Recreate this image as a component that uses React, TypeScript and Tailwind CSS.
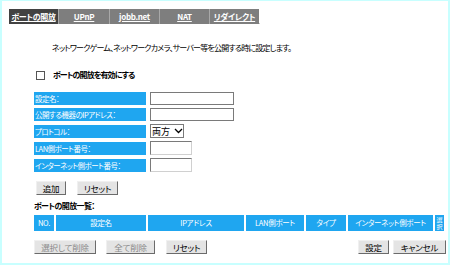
import React from "react";

const F = { fontFamily: '"Noto Sans CJK JP", "Liberation Sans", sans-serif' };

function Btn({ children, w, disabled }: { children: React.ReactNode; w: string; disabled?: boolean }) {
  return (
    <div
      className={`${w} h-[14px] flex items-center justify-center text-[8.5px] tracking-[-0.2px] leading-none whitespace-nowrap border border-t-[#f0f0f0] border-l-[#f0f0f0] border-r-[#6b6b6b] border-b-[#6b6b6b] bg-[#e4e4e4] ${disabled ? "text-[#8a8a8a]" : "text-black"}`}
    >
      {children}
    </div>
  );
}

function Label({ children }: { children: React.ReactNode }) {
  return (
    <div className="w-[112px] h-[13px] bg-[#1fa6f0] text-white text-[7.5px] tracking-[-0.5px] leading-[13px] pl-[1px] whitespace-nowrap">
      {children}
    </div>
  );
}

function Input({ w }: { w: string }) {
  return <div className={`${w} h-[13px] border border-[#7a7a7a] bg-white`} />;
}

export default function App() {
  const tabs = [
    { t: "ポートの開放", w: "w-[49px]", a: true },
    { t: "UPnP", w: "w-[51px]" },
    { t: "jobb.net", w: "w-[50px]" },
    { t: "NAT", w: "w-[50px]" },
    { t: "リダイレクト", w: "w-[50px]" },
  ];
  const heads = [
    { t: "NO.", w: "w-[20px]" },
    { t: "設定名", w: "w-[90px]" },
    { t: "IPアドレス", w: "w-[96px]" },
    { t: "LAN側ポート", w: "w-[58px]" },
    { t: "タイプ", w: "w-[40px]" },
    { t: "インターネット側ポート", w: "w-[85px]" },
  ];
  return (
    <div
      style={F}
      className="w-[450px] h-[265px] bg-white border-[#c8ffff] border-l-2 border-t border-r-2 border-b-2 overflow-hidden [font-feature-settings:'palt']"
    >
      {/* tabs */}
      <div className="ml-[7px] mt-[8px] flex h-[15px] border-b border-[#c8c8c8] w-[251px]">
        {tabs.map((t, i) => (
          <div
            key={i}
            className={`${t.w} h-[15px] flex items-center justify-center text-white text-[8px] tracking-[-0.3px] font-bold underline leading-none whitespace-nowrap ${
              t.a ? "bg-[#424242]" : "bg-[#7e7e7e] border-l border-[#a8a8a8]"
            }`}
          >
            {t.t}
          </div>
        ))}
      </div>

      <div className="ml-[50px] mt-[18px] text-[8px] tracking-[-0.8px] leading-[12px] text-black whitespace-nowrap">
        ネットワークゲーム、ネットワークカメラ、サーバー等を公開する時に設定します。
      </div>

      <div className="ml-[34px] mt-[16px] flex items-center h-[10px]">
        <div className="w-[9px] h-[9px] border border-[#555] bg-white" />
        <div className="ml-[8px] text-[8px] tracking-[-0.9px] font-bold leading-none whitespace-nowrap">ポートの開放を有効にする</div>
      </div>

      <div className="ml-[32px] mt-[12px] flex flex-col gap-[3px]">
        <div className="flex gap-[4px] items-center">
          <Label>設定名：</Label>
          <Input w="w-[84px]" />
        </div>
        <div className="flex gap-[4px] items-center">
          <Label>公開する機器のIPアドレス：</Label>
          <Input w="w-[84px]" />
        </div>
        <div className="flex gap-[4px] items-center">
          <Label>プロトコル：</Label>
          <div className="w-[34px] h-[14px] border border-[#7a7a7a] bg-white flex items-center text-[9px] leading-none pl-[1px]">
            両方
            <svg width="9" height="6" viewBox="0 0 9 6" className="ml-[4px]">
              <path d="M1 1 L4.5 4.5 L8 1" stroke="#000" strokeWidth="1.3" fill="none" />
            </svg>
          </div>
        </div>
        <div className="flex gap-[4px] items-center">
          <Label>LAN側ポート番号：</Label>
          <div className="w-[42px] h-[14px] border border-t-[#7a7a7a] border-l-[#7a7a7a] border-r-[#d0d0d0] border-b-[#d0d0d0] bg-white" />
        </div>
        <div className="flex gap-[4px] items-center">
          <Label>インターネット側ポート番号：</Label>
          <div className="w-[42px] h-[14px] border border-t-[#7a7a7a] border-l-[#7a7a7a] border-r-[#d0d0d0] border-b-[#d0d0d0] bg-white" />
        </div>
      </div>

      <div className="ml-[34px] mt-[9px] flex gap-[11px]">
        <Btn w="w-[30px]">追加</Btn>
        <Btn w="w-[41px]">リセット</Btn>
      </div>

      <div className="ml-[32px] mt-[5px] text-[8px] tracking-[-0.6px] font-bold leading-[12px] whitespace-nowrap">ポートの開放一覧：</div>

      <div className="ml-[32px] mt-[3px] flex gap-[2px]">
        {heads.map((h, i) => (
          <div
            key={i}
            className={`${h.w} h-[16px] bg-[#1fa6f0] text-white text-[7.5px] tracking-[-0.3px] leading-none flex items-center justify-center whitespace-nowrap`}
          >
            {h.t}
          </div>
        ))}
        <div className="w-[9px] h-[16px] bg-[#1fa6f0] text-white text-[6px] leading-[7.5px] flex flex-col items-center justify-center overflow-hidden">
          <span>選</span>
          <span>択</span>
        </div>
      </div>

      <div className="ml-[32px] mt-[9px] flex items-center w-[412px]">
        <Btn w="w-[62px]" disabled>選択して削除</Btn>
        <div className="ml-[10px]">
          <Btn w="w-[49px]" disabled>全て削除</Btn>
        </div>
        <div className="ml-[11px]">
          <Btn w="w-[41px]">リセット</Btn>
        </div>
        <div className="ml-auto flex gap-[4px]">
          <Btn w="w-[31px]">設定</Btn>
          <Btn w="w-[53px]">キャンセル</Btn>
        </div>
      </div>
    </div>
  );
}
